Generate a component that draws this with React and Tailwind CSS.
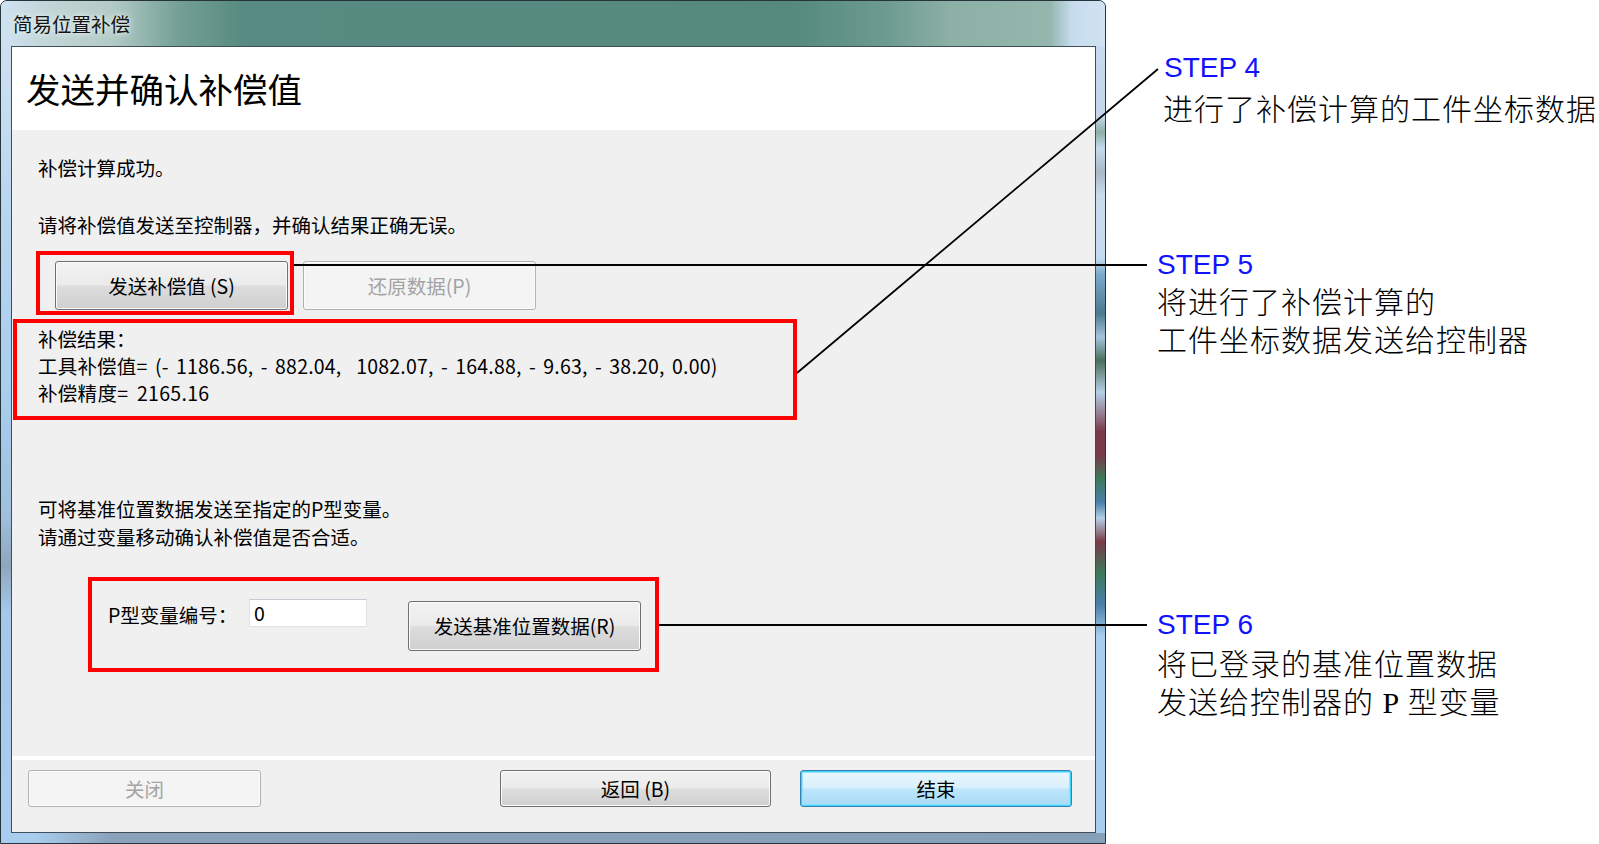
export default function App() {
  const btn =
    "flex items-center justify-center rounded-[3px] border border-[#707070] bg-[linear-gradient(to_bottom,#f2f2f2_0%,#ebebeb_48%,#dddddd_52%,#cfcfcf_100%)] shadow-[inset_0_0_0_1px_#fbfbfb] text-black";
  const btnDisabled =
    "flex items-center justify-center rounded-[3px] border border-[#adb2b5] bg-[#f4f4f4] shadow-[inset_0_0_0_1px_#fcfcfc] text-[#a3a3a3]";
  const ui = "font-['Noto_Sans_CJK_SC',sans-serif]";

  return (
    <div className="relative flex h-[844px] w-[1599px] overflow-hidden bg-white">
      {/* Window */}
      <div
        className={`flex h-[844px] w-[1106px] shrink-0 flex-col rounded-t-[7px] border border-[#26343c] bg-[#a9cbe9] ${ui}`}
      >
        {/* Title bar */}
        <div className="flex h-[45px] shrink-0 items-center rounded-t-[6px] bg-[linear-gradient(to_right,#cfe2f2_0%,#c2d6d8_4%,#b3cbc6_10%,#74a096_16%,#578a80_22%,#568a7f_72%,#6c9a90_80%,#8cb0a6_86%,#94b6ad_95%,#c6dcee_97%,#d2e3f2_100%)] pl-[12px]">
          <span className="text-[19.5px] leading-none text-[#141414] [text-shadow:0_0_8px_#e6f0f0,0_0_4px_#e6f0f0]">
            简易位置补偿
          </span>
        </div>

        <div className="flex h-[787px] shrink-0">
          {/* left frame */}
          <div className="w-[10px] shrink-0 bg-[linear-gradient(to_bottom,#cfe0ef_0%,#b9d6f0_20%,#a8cdee_45%,#9fbfdc_60%,#8ea7bd_66%,#a4c8ea_72%,#a9cdee_100%)]" />

          {/* Client */}
          <div className="flex w-[1085px] shrink-0 flex-col border border-[#3f4e5a] bg-[#f0f0f0]">
            {/* header */}
            <div className="flex h-[83px] shrink-0 items-center bg-white pl-[14px]">
              <span className="text-[34.5px] leading-none text-black">发送并确认补偿值</span>
            </div>

            {/* body */}
            <div className="flex h-[626px] shrink-0 flex-col bg-[#f0f0f0] pt-[24px] text-[19.5px] text-black">
              <div className="ml-[26px] leading-[28px]">补偿计算成功。</div>
              <div className="ml-[26px] mt-[29px] leading-[28px]">
                请将补偿值发送至控制器，并确认结果正确无误。
              </div>

              <div className="mt-[12px] flex items-start">
                <div className="ml-[24px] flex h-[64px] w-[258px] items-start border-4 border-[#ff0000] pl-[15px] pt-[6px]">
                  <div className={`${btn} h-[49px] w-[233px] text-[19.5px]`}>发送补偿值 (S)</div>
                </div>
                <div className={`${btnDisabled} ml-[9px] mt-[10px] h-[49px] w-[233px] text-[19.5px]`}>
                  还原数据(P)
                </div>
              </div>

              <div className="ml-[1px] mt-[4px] h-[101px] w-[784px] border-4 border-[#ff0000] pl-[21px] pt-[2px] leading-[27px]">
                <div>补偿结果：</div>
                <div className="whitespace-pre tracking-[0.2px] [word-spacing:2.8px]">
                  工具补偿值= (- 1186.56, - 882.04,  1082.07, - 164.88, - 9.63, - 38.20, 0.00)
                </div>
                <div className="whitespace-pre tracking-[0.3px] [word-spacing:4px]">补偿精度= 2165.16</div>
              </div>

              <div className="ml-[26px] mt-[75px] leading-[28px]">可将基准位置数据发送至指定的P型变量。</div>
              <div className="ml-[26px] leading-[28px]">请通过变量移动确认补偿值是否合适。</div>

              <div className="ml-[76px] mt-[26px] flex h-[95px] w-[571px] items-start border-4 border-[#ff0000] pl-[16px]">
                <div className="mt-[20px] w-[141px] leading-[28px]">P型变量编号：</div>
                <div className="mt-[18px] flex h-[28px] w-[118px] items-center border border-[#dfe3e8] border-t-[#c5cbd3] bg-white pl-[4px] leading-none">
                  0
                </div>
                <div className={`${btn} ml-[41px] mt-[20px] h-[50px] w-[233px]`}>发送基准位置数据(R)</div>
              </div>
            </div>

            {/* separator */}
            <div className="h-[4px] shrink-0 bg-white" />

            {/* footer */}
            <div className="flex flex-1 items-start bg-[#f0f0f0] pt-[10px] text-[19.5px]">
              <div className={`${btnDisabled} ml-[16px] h-[37px] w-[233px]`}>关闭</div>
              <div className={`${btn} ml-[239px] h-[37px] w-[271px]`}>返回 (B)</div>
              <div className="ml-[29px] flex h-[37px] w-[272px] items-center justify-center rounded-[3px] border border-[#3c7fb1] bg-[linear-gradient(to_bottom,#eaf6fd_0%,#d9f0fc_48%,#bee6fd_52%,#a7d9f5_100%)] shadow-[inset_0_0_0_1px_#3ad3fb,inset_0_0_0_2px_#8fe3fb] text-black">
                结束
              </div>
            </div>
          </div>

          {/* right frame */}
          <div className="w-[9px] shrink-0 bg-[linear-gradient(to_bottom,#c6dcee_0%,#c2d8ea_9%,#8fb0a8_11%,#c4daee_13%,#a7b9c6_16%,#c8dcee_19%,#c5dbef_27%,#7aa9cc_29%,#4d7a90_34%,#a5c4dc_37%,#4a6e5c_40%,#b5cfe6_44%,#7a3a48_49%,#7a3a48_52%,#3d7a5a_55%,#4a7faa_58%,#b5cfe6_60%,#7a3a48_63%,#3d7a5a_67%,#4a7faa_71%,#a8cdee_75%,#a8cdee_100%)]" />
        </div>

        {/* bottom frame */}
        <div className="h-[10px] shrink-0 bg-[linear-gradient(to_right,#a9cdee_0%,#a9cdee_3%,#8aa2ba_10%,#86a0b8_100%)]" />
      </div>

      {/* Annotations */}
      <div className="flex flex-col pl-[51px] pt-[52px]">
        <div className="ml-[7px] font-['Liberation_Sans',Arial,sans-serif] text-[28px] leading-[32px] text-[#1212ff]">
          STEP 4
        </div>
        <div className="ml-[6px] mt-[7px] whitespace-nowrap font-['Liberation_Serif','Noto_Sans_CJK_SC',serif] text-[30px] font-light leading-[38px] tracking-[1px] text-black">
          进行了补偿计算的工件坐标数据
        </div>

        <div className="mt-[120px] font-['Liberation_Sans',Arial,sans-serif] text-[28px] leading-[32px] text-[#1212ff]">
          STEP 5
        </div>
        <div className="mt-[3px] whitespace-nowrap font-['Liberation_Serif','Noto_Sans_CJK_SC',serif] text-[30px] font-light leading-[38px] tracking-[1px] text-black">
          <div>将进行了补偿计算的</div>
          <div>工件坐标数据发送给控制器</div>
        </div>

        <div className="mt-[249px] font-['Liberation_Sans',Arial,sans-serif] text-[28px] leading-[32px] text-[#1212ff]">
          STEP 6
        </div>
        <div className="mt-[5px] whitespace-pre font-['Liberation_Serif','Noto_Sans_CJK_SC',serif] text-[30px] font-light leading-[38px] tracking-[1px] text-black">
          <div>将已登录的基准位置数据</div>
          <div>发送给控制器的 P 型变量</div>
        </div>
      </div>

      {/* Leader lines */}
      <svg
        className="pointer-events-none absolute left-0 top-0"
        width="1599"
        height="844"
        viewBox="0 0 1599 844"
      >
        <line x1="797" y1="373" x2="1158" y2="69" stroke="#000" strokeWidth="1.8" />
        <line x1="294" y1="265" x2="1147" y2="265" stroke="#000" strokeWidth="1.8" />
        <line x1="659" y1="625" x2="1147" y2="625" stroke="#000" strokeWidth="1.8" />
      </svg>
    </div>
  );
}
